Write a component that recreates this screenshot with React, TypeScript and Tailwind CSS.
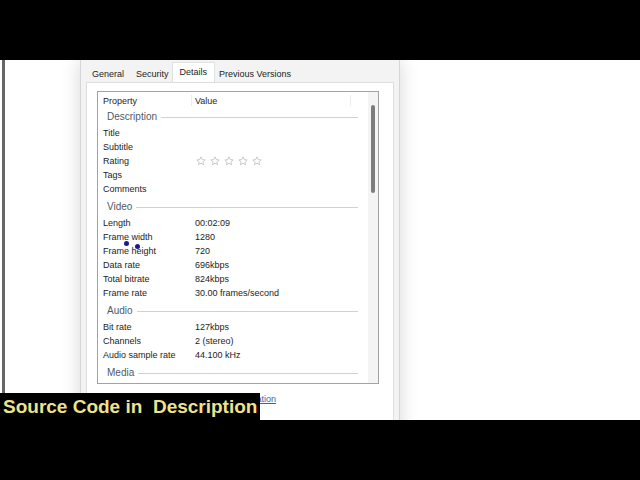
import React from 'react';

type Row = { label: string; value?: string; stars?: boolean };
type Group = { title: string; rows: Row[] };

const groups: Group[] = [
    {
        title: 'Description',
        rows: [
            { label: 'Title' },
            { label: 'Subtitle' },
            { label: 'Rating', stars: true },
            { label: 'Tags' },
            { label: 'Comments' },
        ],
    },
    {
        title: 'Video',
        rows: [
            { label: 'Length', value: '00:02:09' },
            { label: 'Frame width', value: '1280' },
            { label: 'Frame height', value: '720' },
            { label: 'Data rate', value: '696kbps' },
            { label: 'Total bitrate', value: '824kbps' },
            { label: 'Frame rate', value: '30.00 frames/second' },
        ],
    },
    {
        title: 'Audio',
        rows: [
            { label: 'Bit rate', value: '127kbps' },
            { label: 'Channels', value: '2 (stereo)' },
            { label: 'Audio sample rate', value: '44.100 kHz' },
        ],
    },
    { title: 'Media', rows: [] },
];

const Star: React.FC = () => (
    <svg width="10" height="10" viewBox="0 0 24 24" fill="none" stroke="#b4b4b4" strokeWidth="1.6" strokeLinejoin="round">
        <polygon points="12,2 14.9,8.6 22,9.3 16.6,14 18.2,21 12,17.3 5.8,21 7.4,14 2,9.3 9.1,8.6" />
    </svg>
);

const GroupHeader: React.FC<{ title: string }> = ({ title }) => (
    <div className="h-[20px] flex items-center pt-[2px] pl-[9px] pr-[10px]">
        <span className="text-[10px] leading-[12px] text-[#505a66]">{title}</span>
        <div className="flex-1 h-px bg-[#d2d2d2] ml-[4px]" />
    </div>
);

const PropRow: React.FC<{ row: Row }> = ({ row }) => (
    <div className="h-[14px] flex items-center pl-[5px] text-[9px] leading-[12px] text-[#1c1c1c]">
        <span className="w-[92px] shrink-0">{row.label}</span>
        {row.stars ? (
            <div className="flex gap-[4px] ml-[1px]">
                <Star />
                <Star />
                <Star />
                <Star />
                <Star />
            </div>
        ) : (
            <span>{row.value}</span>
        )}
    </div>
);

export default function App() {
    return (
        <div className="w-[640px] h-[480px] flex flex-col bg-black overflow-hidden" style={{ fontFamily: '"Liberation Sans", Arial, sans-serif' }}>
            <div className="h-[60px] bg-black shrink-0" />
            <div className="relative h-[360px] bg-white flex shrink-0 overflow-hidden">
                <div className="ml-[2px] w-[3px] h-[333px] bg-[#666666]" />
                <div className="ml-[75px] w-[320px] h-[380px] flex flex-col bg-[#f3f3f3] border-x border-[#d6d6d6] shadow-[0_0_18px_rgba(0,0,0,0.16)]">
                    <div className="h-[22px] flex items-start pt-[8px] pl-[11px] text-[9px] leading-[12px] text-[#1c1c1c] shrink-0">
                        <span>General</span>
                        <span className="ml-[12px]">Security</span>
                        <div className="ml-[3px] mt-[-6px] h-[20px] pt-[3px] px-[7px] bg-white border border-b-0 border-[#e0e0e0]">Details</div>
                        <span className="ml-[4px]">Previous Versions</span>
                    </div>
                    <div className="flex-1 mx-[5px] bg-white border border-[#dddddd] flex flex-col">
                        <div className="ml-[10px] mt-[8px] w-[282px] h-[293px] border border-[#a3a3a3] flex bg-white">
                            <div className="flex-1 flex flex-col pt-[1px]">
                                <div className="h-[13px] flex items-center pt-[2px] pl-[5px] text-[9px] leading-[12px] text-[#1c1c1c]">
                                    <span className="w-[88px]">Property</span>
                                    <div className="w-px h-full bg-[#ececec]" />
                                    <span className="ml-[3px] w-[155px]">Value</span>
                                    <div className="w-px h-full bg-[#ececec]" />
                                </div>
                                {groups.map((g) => (
                                    <div key={g.title}>
                                        <GroupHeader title={g.title} />
                                        {g.rows.map((r) => (
                                            <PropRow key={r.label} row={r} />
                                        ))}
                                    </div>
                                ))}
                            </div>
                            <div className="w-[10px] bg-[#f4f4f4] flex justify-center pt-[13px]">
                                <div className="w-[4px] h-[88px] rounded-full bg-[#7d7d7d]" />
                            </div>
                        </div>
                        <div className="ml-[9px] mt-[9px] text-[9px] leading-[12px]">
                            <span className="text-[#2e6ab3] underline">Remove Properties and Personal Information</span>
                        </div>
                    </div>
                </div>
                <div className="absolute left-[124px] top-[181px] w-[5px] h-[5px] rounded-full bg-[#1a1a8c]" />
                <div className="absolute left-[135px] top-[184px] w-[5px] h-[5px] rounded-full bg-[#1a1a8c]" />
                <div className="absolute left-0 bottom-0 w-[260px] h-[27px] bg-black flex items-center pl-[3px]">
                    <span className="text-[19px] leading-[22px] font-bold text-[#eee38c] whitespace-pre">Source Code in  Description</span>
                </div>
            </div>
            <div className="h-[60px] bg-black shrink-0" />
        </div>
    );
}
